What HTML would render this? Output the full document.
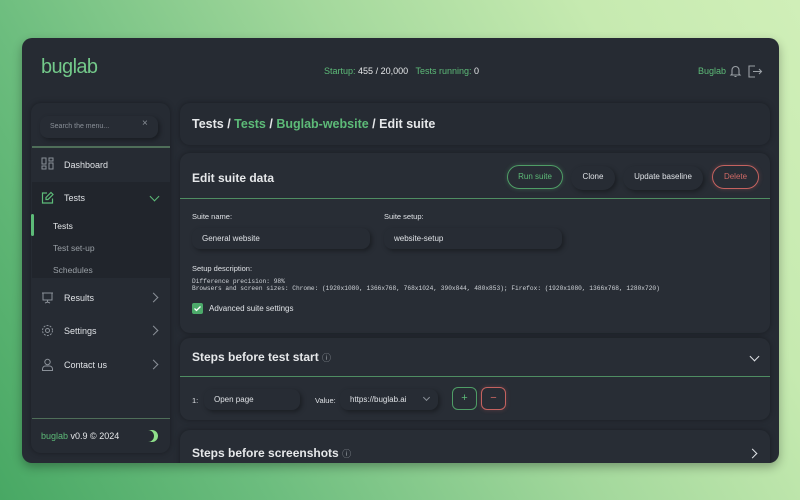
<!DOCTYPE html>
<html><head><meta charset="utf-8"><style>
*{margin:0;padding:0;box-sizing:border-box}
body{width:800px;height:500px;overflow:hidden;font-family:"Liberation Sans",sans-serif;background:linear-gradient(60deg,#48a864 0%,#6cbd7e 25%,#a3d89c 55%,#c6eab0 80%,#d0efb8 100%);position:relative}
.panel{position:absolute;left:22px;top:38px;width:757px;height:425px;background:#262b33;border-radius:10px;overflow:hidden;box-shadow:0 4px 10px rgba(0,0,0,.3)}
.a{position:absolute;white-space:nowrap}
.g{color:#5dbb78}
.w{color:#e6e8ea}
.card{position:absolute;background:#282d35;border-radius:10px;box-shadow:0 0 6px rgba(0,0,0,.35)}
.inp{position:absolute;background:#272c34;border-radius:8px;box-shadow:2px 2px 5px rgba(0,0,0,.35);font-size:8px;color:#dfe2e6;padding:0 10px;line-height:22px}
.btn{position:absolute;height:24px;border-radius:12px;font-size:8px;text-align:center;line-height:22px;color:#dfe2e6}
.mono{font-family:"Liberation Mono",monospace;font-size:6.2px;color:#cfd3d8;line-height:7px}
.nav{position:absolute;left:42px;font-size:9px;color:#dfe2e6}
.chev{position:absolute;width:7px;height:7px;border-right:1.3px solid #8a9098;border-bottom:1.3px solid #8a9098}
</style></head><body>
<div class="panel">
 <!-- header -->
 <div class="a g" style="left:19px;top:18px;font-size:20px;letter-spacing:-0.6px;color:#73c98a">buglab</div>
 <div class="a" style="left:302px;top:28px;font-size:9px"><span class="g">Startup:</span> <span class="w">455 / 20,000</span> &nbsp; <span class="g">Tests running:</span> <span class="w">0</span></div>
 <div class="a g" style="left:676px;top:28px;font-size:9px">Buglab</div>
 <svg class="a" style="left:707px;top:26px" width="34" height="14" viewBox="0 0 34 14"><path d="M3 10V6a3.5 3.5 0 017 0v4l1 1H2z M5.5 12.5h2" fill="none" stroke="#9aa0a6" stroke-width="1.1"/><path d="M26 2h-6v11h6 M24 7.5h8 M30 5l2.5 2.5L30 10" fill="none" stroke="#9aa0a6" stroke-width="1.1"/></svg>

 <!-- sidebar -->
 <div class="card" style="left:9px;top:65px;width:139px;height:350px;background:#262b33"></div>
 <div class="inp" style="left:18px;top:78px;width:118px;height:22px;color:#8a9098;font-size:7px">Search the menu...</div>
 <div class="a" style="left:120px;top:80px;color:#8a9098;font-size:10px">×</div>
 <div class="a" style="left:10px;top:108px;width:138px;height:2px;background:#4f6e59"></div>
 <svg class="a" style="left:19px;top:119px" width="13" height="13" viewBox="0 0 13 13" fill="none" stroke="#8a9098" stroke-width="1"><rect x="1" y="1" width="4" height="6"/><rect x="8" y="1" width="4" height="3"/><rect x="1" y="9" width="4" height="3"/><rect x="8" y="6" width="4" height="6"/></svg>
 <div class="nav" style="top:122px">Dashboard</div>
 <div class="a" style="left:10px;top:144px;width:138px;height:96px;background:#21252c"></div>
 <svg class="a" style="left:19px;top:153px" width="13" height="13" viewBox="0 0 13 13" fill="none" stroke="#5dbb78" stroke-width="1.2"><path d="M6 2H1.5v10h10V7.5"/><path d="M10 1.5l2 2L7 8.5H5v-2z"/></svg>
 <div class="nav g" style="top:155px">Tests</div>
 <div class="chev" style="left:129px;top:155px;transform:rotate(45deg);border-color:#5dbb78"></div>
 <div class="a" style="left:9px;top:176px;width:3px;height:22px;background:#5dbb78;border-radius:2px"></div>
 <div class="a" style="left:31px;top:183px;font-size:8.5px;color:#e6e8ea">Tests</div>
 <div class="a" style="left:31px;top:205px;font-size:8.5px;color:#9aa0a6">Test set-up</div>
 <div class="a" style="left:31px;top:227px;font-size:8.5px;color:#9aa0a6">Schedules</div>
 <svg class="a" style="left:19px;top:253px" width="13" height="13" viewBox="0 0 13 13" fill="none" stroke="#8a9098" stroke-width="1"><path d="M1 2h11M2 2v7h9V2M6.5 9v2M4 12l2.5-1 2.5 1"/></svg>
 <div class="nav" style="top:255px">Results</div>
 <div class="chev" style="left:128px;top:256px;transform:rotate(-45deg)"></div>
 <svg class="a" style="left:19px;top:286px" width="13" height="13" viewBox="0 0 13 13" fill="none" stroke="#8a9098" stroke-width="1"><circle cx="6.5" cy="6.5" r="2"/><circle cx="6.5" cy="6.5" r="5" stroke-dasharray="2 1.2"/></svg>
 <div class="nav" style="top:288px">Settings</div>
 <div class="chev" style="left:128px;top:289px;transform:rotate(-45deg)"></div>
 <svg class="a" style="left:19px;top:320px" width="13" height="13" viewBox="0 0 13 13" fill="none" stroke="#8a9098" stroke-width="1"><circle cx="6.5" cy="4" r="2.7"/><path d="M1.5 12.5v-1.5a3 3 0 013-3h4a3 3 0 013 3v1.5z"/></svg>
 <div class="nav" style="top:322px">Contact us</div>
 <div class="chev" style="left:128px;top:323px;transform:rotate(-45deg)"></div>
 <div class="a" style="left:10px;top:380px;width:138px;height:1px;background:#4f6e59"></div>
 <div class="a" style="left:19px;top:393px;font-size:9px"><span class="g">buglab</span> <span class="w">v0.9 © 2024</span></div>
 <svg class="a" style="left:124px;top:391px" width="14" height="14" viewBox="0 0 14 14"><path d="M2 1h4a6 6 0 010 12H2a6 6 0 000-12z" fill="#8fe08a"/><path d="M4 3a5 5 0 010 8" fill="none" stroke="#262b33" stroke-width="1.3"/></svg>

 <!-- breadcrumb -->
 <div class="card" style="left:158px;top:65px;width:590px;height:42px;background:#262b33"></div>
 <div class="a" style="left:170px;top:79px;font-size:12.5px;font-weight:bold;color:#e6e8ea">Tests / <span class="g">Tests</span> / <span class="g">Buglab-website</span> / Edit suite</div>

 <!-- edit suite card -->
 <div class="card" style="left:158px;top:115px;width:590px;height:180px"></div>
 <div class="a" style="left:170px;top:133px;font-size:12px;font-weight:bold;color:#e6e8ea">Edit suite data</div>
 <div class="btn" style="left:485px;top:127px;width:56px;border:1px solid #4f9d66;color:#5dbb78;box-shadow:0 0 5px rgba(93,187,120,.3)">Run suite</div>
 <div class="btn" style="left:549px;top:128px;width:44px;background:#272c34;box-shadow:2px 2px 5px rgba(0,0,0,.35)">Clone</div>
 <div class="btn" style="left:601px;top:128px;width:80px;background:#272c34;box-shadow:2px 2px 5px rgba(0,0,0,.35)">Update baseline</div>
 <div class="btn" style="left:690px;top:127px;width:47px;border:1px solid #c4625f;color:#d06a66;box-shadow:0 0 5px rgba(208,100,100,.3)">Delete</div>
 <div class="a" style="left:158px;top:160px;width:590px;height:1px;background:#4f8d62"></div>
 <div class="a" style="left:170px;top:174px;font-size:7.5px;color:#dfe2e6">Suite name:</div>
 <div class="a" style="left:362px;top:174px;font-size:7.5px;color:#dfe2e6">Suite setup:</div>
 <div class="inp" style="left:170px;top:190px;width:178px;height:21px;line-height:21px">General website</div>
 <div class="inp" style="left:362px;top:190px;width:178px;height:21px;line-height:21px">website-setup</div>
 <div class="a" style="left:170px;top:226px;font-size:7.5px;color:#dfe2e6">Setup description:</div>
 <div class="a mono" style="left:170px;top:240px">Difference precision: 98%<br>Browsers and screen sizes: Chrome: (1920x1080, 1366x768, 768x1024, 390x844, 480x853); Firefox: (1920x1080, 1366x768, 1280x720)</div>
 <div class="a" style="left:170px;top:265px;width:11px;height:11px;background:#4caa6a;border-radius:2px"></div>
 <svg class="a" style="left:170px;top:265px" width="11" height="11"><path d="M2.5 5.5l2 2 4-4" fill="none" stroke="#fff" stroke-width="1.3"/></svg>
 <div class="a" style="left:187px;top:266px;font-size:8px;color:#dfe2e6">Advanced suite settings</div>

 <!-- steps before test start -->
 <div class="card" style="left:158px;top:300px;width:590px;height:82px"></div>
 <div class="a" style="left:170px;top:312px;font-size:12px;font-weight:bold;color:#e6e8ea">Steps before test start <span style="font-size:9px;font-weight:normal;color:#9aa0a6">ⓘ</span></div>
 <div class="chev" style="left:729px;top:315px;transform:rotate(45deg);border-color:#dfe2e6"></div>
 <div class="a" style="left:158px;top:338px;width:590px;height:1px;background:#4f8d62"></div>
 <div class="a" style="left:170px;top:358px;font-size:7.5px;color:#dfe2e6">1:</div>
 <div class="inp" style="left:182px;top:351px;width:96px;height:21px;line-height:21px">Open page</div>
 <div class="a" style="left:293px;top:358px;font-size:7.5px;color:#dfe2e6">Value:</div>
 <div class="inp" style="left:318px;top:351px;width:98px;height:21px;line-height:21px">https://buglab.ai</div>
 <div class="chev" style="left:402px;top:357px;width:5px;height:5px;transform:rotate(45deg)"></div>
 <div class="a" style="left:430px;top:349px;width:25px;height:23px;border:1px solid #4f9d66;border-radius:6px;color:#5dbb78;text-align:center;line-height:20px;font-size:11px">+</div>
 <div class="a" style="left:459px;top:349px;width:25px;height:23px;border:1px solid #c4625f;border-radius:6px;color:#d06a66;text-align:center;line-height:20px;font-size:11px;box-shadow:0 0 5px rgba(208,100,100,.3)">−</div>

 <!-- steps before screenshots -->
 <div class="card" style="left:158px;top:392px;width:590px;height:60px"></div>
 <div class="a" style="left:170px;top:408px;font-size:12px;font-weight:bold;color:#e6e8ea">Steps before screenshots <span style="font-size:9px;font-weight:normal;color:#9aa0a6">ⓘ</span></div>
 <div class="chev" style="left:727px;top:412px;transform:rotate(-45deg);border-color:#dfe2e6"></div>
</div>
</body></html>
